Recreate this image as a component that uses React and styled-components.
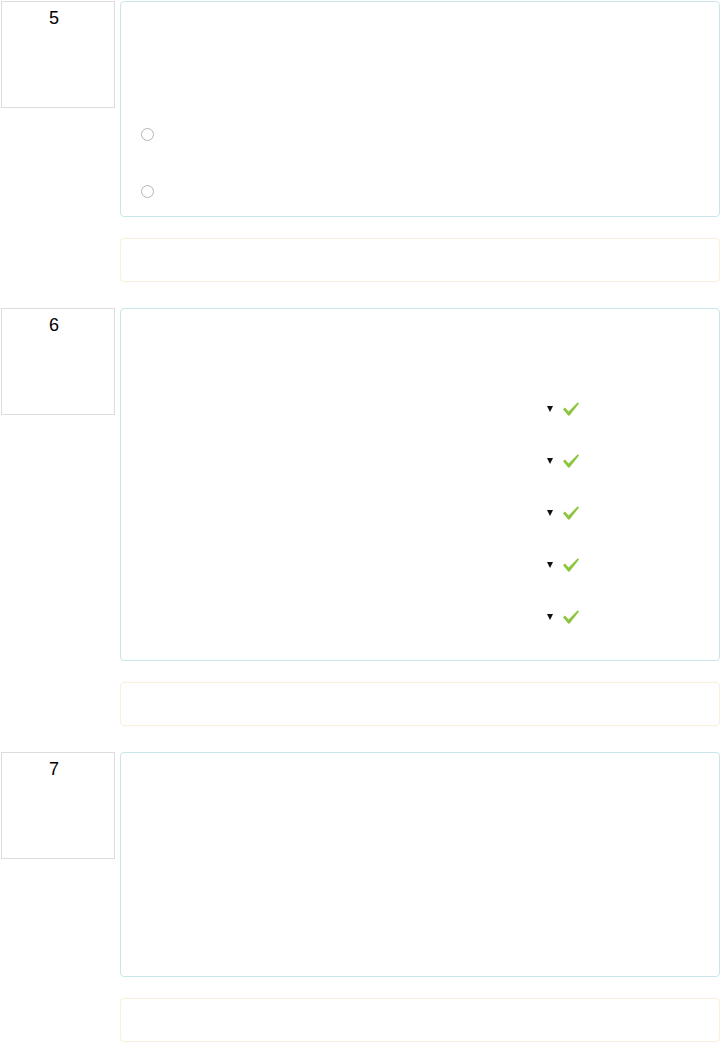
import React from "react";
import styled, { createGlobalStyle } from "styled-components";

const Global = createGlobalStyle`
  html, body { margin: 0; padding: 0; background: #fff; }
  body { font-family: "Liberation Sans", Arial, sans-serif; color: #1d2125; }
`;

const Page = styled.div`
  padding: 1px 0 0 1px;
  width: 720px;
  box-sizing: border-box;
`;

const Question = styled.div`
  display: grid;
  grid-template-columns: 114px 1fr;
  column-gap: 5px;
  margin-bottom: 26px;
  align-items: start;
`;

const Info = styled.div`
  box-sizing: border-box;
  height: 107px;
  border: 1px solid #dcdcdc;
  background: #fff;
  display: flex;
  justify-content: center;
  padding: 6px 8px 0 0;
`;

const Number = styled.h3`
  margin: 0;
  font-size: 18px;
  font-weight: 400;
  line-height: 20px;
  color: #000;
`;

const Main = styled.div`
  display: flex;
  flex-direction: column;
  gap: 21px;
`;

const Content = styled.div`
  box-sizing: border-box;
  height: ${(p) => p.$h}px;
  border: 1px solid #cbe6eb;
  border-radius: 4px;
  background: #fff;
  display: flex;
  flex-direction: column;
  padding-top: ${(p) => p.$pt}px;
  overflow: hidden;
`;

const Feedback = styled.div`
  box-sizing: border-box;
  height: 44px;
  border: 1px solid #fbeedc;
  border-radius: 4px;
  background: #fff;
`;

const RadioRow = styled.div`
  flex: 0 0 57px;
  display: flex;
  align-items: center;
  padding-left: 20px;
`;

const Radio = styled.span`
  width: 13px;
  height: 13px;
  box-sizing: border-box;
  border-radius: 50%;
  border: 1px solid #b5b5b5;
  background: #fff;
`;

const MatchRow = styled.div`
  flex: 0 0 52px;
  display: flex;
  align-items: center;
  padding-left: 426px;
  gap: 9px;
`;

const Caret = styled.span`
  width: 0;
  height: 0;
  border-left: 3.5px solid transparent;
  border-right: 3.5px solid transparent;
  border-top: 6px solid #111;
`;

const Check = () => (
  <svg width="18" height="16" viewBox="0 0 18 16">
    <path
      d="M1 8.2 L3 6.6 L6.6 10.4 L15.8 1.2 L17 2.4 L7.6 14.6 L6.4 14.8 Z"
      fill="#8cc63e"
    />
  </svg>
);

export default function App() {
  return (
    <>
      <Global />
      <Page>
        <Question>
          <Info><Number>5</Number></Info>
          <Main>
            <Content $h={216} $pt={104}>
              <RadioRow><Radio /></RadioRow>
              <RadioRow><Radio /></RadioRow>
            </Content>
            <Feedback />
          </Main>
        </Question>
        <Question>
          <Info><Number>6</Number></Info>
          <Main>
            <Content $h={353} $pt={74}>
              {[0, 1, 2, 3, 4].map((i) => (
                <MatchRow key={i}><Caret /><Check /></MatchRow>
              ))}
            </Content>
            <Feedback />
          </Main>
        </Question>
        <Question>
          <Info><Number>7</Number></Info>
          <Main>
            <Content $h={225} $pt={0} />
            <Feedback />
          </Main>
        </Question>
      </Page>
    </>
  );
}
